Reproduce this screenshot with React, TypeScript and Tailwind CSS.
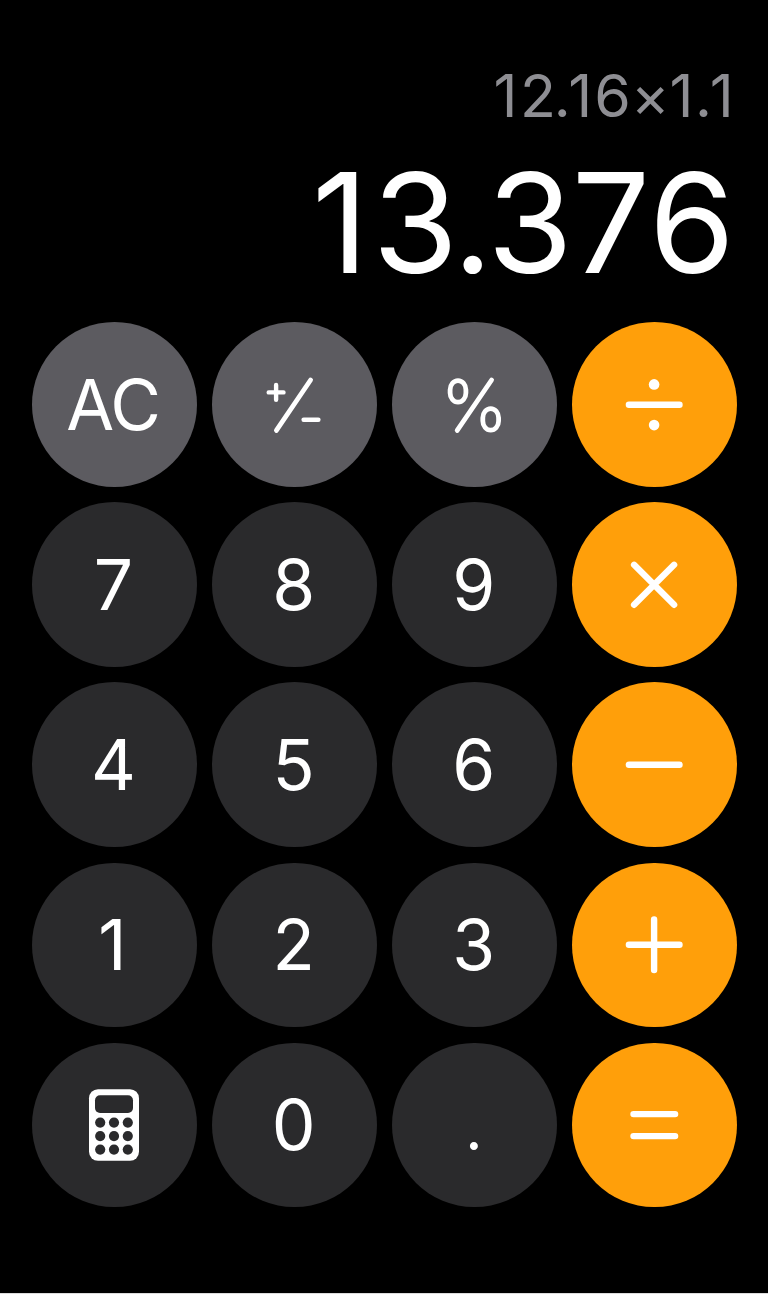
import type { ReactNode } from 'react';
import clsx from 'clsx';

type KeyVariant = 'function' | 'digit' | 'operator';

interface CalculatorKey {
  id: string;
  label: ReactNode;
  variant: KeyVariant;
}

// All glyphs share a viewBox whose origin is the centre of the key
function Glyph({ children, strokeWidth = 6.4 }: { children: ReactNode; strokeWidth?: number }) {
  return (
    <svg
      viewBox="-40 -40 80 80"
      className="size-20"
      fill="none"
      stroke="currentColor"
      strokeWidth={strokeWidth}
      strokeLinecap="round"
      aria-hidden="true"
    >
      {children}
    </svg>
  );
}

const PlusMinusIcon = () => (
  <Glyph strokeWidth={4.4}>
    <path d="M-25.3 -12.6h14.8M-17.9 -20v14.8" />
    <path d="M16.6 -25L-17.6 25.4" strokeWidth={4.8} />
    <path d="M9.6 14.8h14.8" />
  </Glyph>
);

const PercentIcon = () => (
  <Glyph strokeWidth={4.8}>
    <path d="M16.6 -25L-17.8 25.4" />
    <rect x={-24.9} y={-24.4} width={15.8} height={21.6} rx={7.9} ry={9.2} />
    <rect x={7.8} y={3.6} width={15.8} height={21.6} rx={7.9} ry={9.2} />
  </Glyph>
);

const DivideIcon = () => (
  <Glyph>
    <path d="M-26.1 -0.2h50.6" />
    <circle cy={-20.6} cx={-0.9} r={5.3} fill="currentColor" stroke="none" />
    <circle cy={20.1} cx={-0.9} r={5.3} fill="currentColor" stroke="none" />
  </Glyph>
);

const MultiplyIcon = () => (
  <Glyph>
    <path d="M-20.9 -20.2L19.1 19.8M19.1 -20.2L-20.9 19.8" />
  </Glyph>
);

const MinusIcon = () => (
  <Glyph>
    <path d="M-26.1 -0.2h50.6" />
  </Glyph>
);

const PlusIcon = () => (
  <Glyph>
    <path d="M-26.1 -0.2h50.6M-0.9 -25.5v50.6" />
  </Glyph>
);

const EqualsIcon = () => (
  <Glyph>
    <path d="M-21.5 -10.9h41.6M-21.5 11.1h41.6" />
  </Glyph>
);

const CalculatorIcon = () => (
  <Glyph>
    <g stroke="none">
      <rect x={-25} y={-35.8} width={50} height={71.6} rx={9} fill="white" />
      <rect x={-19} y={-29.8} width={38} height={17.8} rx={5} fill="#2a2a2c" />
      {[-2.4, 11.1, 24.6].map((cy) =>
        [-13.8, 0, 13.8].map((cx) => (
          <circle key={`${cx}-${cy}`} cx={cx} cy={cy} r={5.1} fill="#2a2a2c" />
        ))
      )}
    </g>
  </Glyph>
);

const keys: CalculatorKey[] = [
  { id: 'clear', label: <span className="pt-[3px] pr-[2.5px] tracking-[-1.6px]">AC</span>, variant: 'function' },
  { id: 'sign', label: <PlusMinusIcon />, variant: 'function' },
  { id: 'percent', label: <PercentIcon />, variant: 'function' },
  { id: 'divide', label: <DivideIcon />, variant: 'operator' },
  { id: '7', label: '7', variant: 'digit' },
  { id: '8', label: '8', variant: 'digit' },
  { id: '9', label: '9', variant: 'digit' },
  { id: 'multiply', label: <MultiplyIcon />, variant: 'operator' },
  { id: '4', label: '4', variant: 'digit' },
  { id: '5', label: '5', variant: 'digit' },
  { id: '6', label: '6', variant: 'digit' },
  { id: 'subtract', label: <MinusIcon />, variant: 'operator' },
  { id: '1', label: <span className="pr-[2px]">1</span>, variant: 'digit' },
  { id: '2', label: '2', variant: 'digit' },
  { id: '3', label: '3', variant: 'digit' },
  { id: 'add', label: <PlusIcon />, variant: 'operator' },
  { id: 'mode', label: <CalculatorIcon />, variant: 'digit' },
  { id: '0', label: '0', variant: 'digit' },
  { id: 'decimal', label: <span className="text-[60px]">.</span>, variant: 'digit' },
  { id: 'equals', label: <EqualsIcon />, variant: 'operator' },
];

export default function App() {
  return (
    <div className="flex h-[1294px] w-[768px] flex-col overflow-hidden border-b border-[#dcdcdc] bg-black font-['Inter',sans-serif] text-white">
      <header className="flex flex-col items-end pt-[60px] [font-kerning:none]">
        <div className="mr-[34.5px] h-[72px] text-[59px] leading-[72px] tracking-[-0.3px] text-[#8e8e93]">
          <span className="tracking-[2.5px]">1</span>
          <span className="tracking-[-2.3px]">2.</span>
          <span className="tracking-[2px]">1</span>6
          <span className="tracking-[-0.3px]">×</span>
          <span className="tracking-[1.7px]">1</span>
          <span className="tracking-[-2.3px]">.</span>1
        </div>
        <div className="mt-[11px] mr-[34px] h-[159px] text-[138.5px] leading-[160px] tracking-[-1px]">
          <span className="tracking-[4.2px]">1</span>
          <span className="tracking-[-5.4px]">3.</span>376
        </div>
      </header>

      <main className="mt-[20.3px] grid grid-cols-4 gap-[15.4px] pr-[30.9px] pl-[31.8px]">
        {keys.map(({ id, label, variant }) => (
          <button
            key={id}
            type="button"
            aria-label={id}
            className={clsx(
              'flex h-[164.7px] items-center justify-center rounded-full text-[69.5px] leading-none',
              variant === 'function' && 'bg-[#5c5b60]',
              variant === 'digit' && 'bg-[#2a2a2c]',
              variant === 'operator' && 'bg-[#ff9f0a]'
            )}
          >
            {variant === 'digit' && id !== 'mode' ? <span className="pt-[2.2px] pr-[1.4px]">{label}</span> : label}
          </button>
        ))}
      </main>
    </div>
  );
}
